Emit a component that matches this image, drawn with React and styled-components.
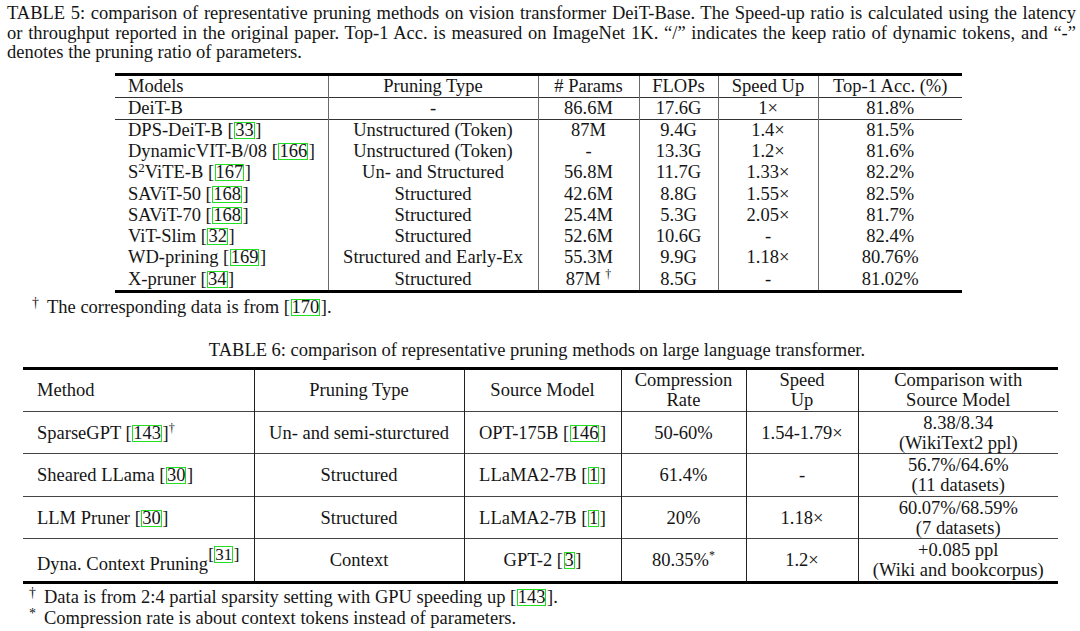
import styled, { createGlobalStyle } from "styled-components";

const GlobalStyle = createGlobalStyle`
  html, body {
    margin: 0;
    padding: 0;
    background: #fff;
  }
  body {
    font-family: "Liberation Serif", "Times New Roman", serif;
    color: #151515;
  }
`;

const Page = styled.div`
  width: 1080px;
  height: 631px;
  box-sizing: border-box;
  padding: 4px 4px 0 7px;
  overflow: hidden;
  font-size: 18.5px;
`;

const Caption = styled.div`
  line-height: 19.5px;
`;

const CapLine = styled.span`
  display: block;
  text-align: justify;
  text-align-last: ${(p) => (p.$last ? "left" : "justify")};
`;

const Table = styled.table`
  border-collapse: collapse;
  table-layout: fixed;
  width: ${(p) => p.$width}px;
  margin: ${(p) => p.$top}px 0 0 ${(p) => p.$left}px;
  border-top: 3px solid #000;
  border-bottom: 3px solid #000;
`;

const Row = styled.tr`
  border-bottom: ${(p) => (p.$rule ? `1px solid ${p.$rule}` : "none")};
`;

const Cell5 = styled.td`
  height: ${(p) => p.$h}px;
  padding: 0 0 0 ${(p) => (p.$left ? 13 : 0)}px;
  line-height: 21px;
  text-align: ${(p) => (p.$left ? "left" : "center")};
  border-left: ${(p) => (p.$left ? "none" : "1px solid #6a6a6a")};
  white-space: nowrap;
  vertical-align: middle;
`;

const Cell6 = styled.td`
  height: ${(p) => p.$h}px;
  padding: 0 0 0 ${(p) => (p.$left ? 14 : 0)}px;
  line-height: 20px;
  text-align: ${(p) => (p.$left ? "left" : "center")};
  border-left: ${(p) => (p.$left ? "none" : "1px solid #222")};
  white-space: nowrap;
  vertical-align: middle;
`;

const Cite = styled.span`
  display: inline-block;
  border: 1px solid #22e022;
  line-height: 15px;
  padding: 0;
  margin: 0 0.5px;
`;

const Sup = styled.sup`
  font-size: ${(p) => p.$size || 12}px;
  line-height: 0;
  vertical-align: ${(p) => p.$up || 7}px;
`;

const Mark = styled.span`
  display: inline-block;
  width: 15px;
  font-size: 14px;
  line-height: 0;
  vertical-align: 6px;
`;

const Note = styled.div`
  line-height: ${(p) => p.$lh || 20}px;
  padding-left: ${(p) => p.$indent}px;
  margin-top: ${(p) => p.$top || 0}px;
`;

const Title6 = styled.div`
  text-align: center;
  padding-right: 9px;
  line-height: 20px;
  margin-top: 23px;
`;

const Lines = styled.span`
  display: inline-block;
  line-height: 20px;
`;

const ref = (n) => (
  <>
    [<Cite>{n}</Cite>]
  </>
);

const cols5 = [213, 210, 101, 79, 100, 144];
const cols6 = [231, 210, 157, 125, 112, 200];

const rows5 = [
  [<>DPS-DeiT-B {ref(33)}</>, "Unstructured (Token)", "87M", "9.4G", "1.4×", "81.5%"],
  [<>DynamicVIT-B/08 {ref(166)}</>, "Unstructured (Token)", "-", "13.3G", "1.2×", "81.6%"],
  [<>S<Sup $size={13} $up={6}>2</Sup>ViTE-B {ref(167)}</>, "Un- and Structured", "56.8M", "11.7G", "1.33×", "82.2%"],
  [<>SAViT-50 {ref(168)}</>, "Structured", "42.6M", "8.8G", "1.55×", "82.5%"],
  [<>SAViT-70 {ref(168)}</>, "Structured", "25.4M", "5.3G", "2.05×", "81.7%"],
  [<>ViT-Slim {ref(32)}</>, "Structured", "52.6M", "10.6G", "-", "82.4%"],
  [<>WD-prining {ref(169)}</>, "Structured and Early-Ex", "55.3M", "9.9G", "1.18×", "80.76%"],
  [<>X-pruner {ref(34)}</>, "Structured", <>87M <Sup>†</Sup></>, "8.5G", "-", "81.02%"],
];

const two = (a, b) => (
  <Lines>
    {a}
    <br />
    {b}
  </Lines>
);

const rows6 = [
  [<>SparseGPT {ref(143)}<Sup>†</Sup></>, "Un- and semi-sturctured", <>OPT-175B {ref(146)}</>, "50-60%", "1.54-1.79×", two("8.38/8.34", "(WikiText2 ppl)")],
  [<>Sheared LLama {ref(30)}</>, "Structured", <>LLaMA2-7B {ref(1)}</>, "61.4%", "-", two("56.7%/64.6%", "(11 datasets)")],
  [<>LLM Pruner {ref(30)}</>, "Structured", <>LLaMA2-7B {ref(1)}</>, "20%", "1.18×", two("60.07%/68.59%", "(7 datasets)")],
  [<>Dyna. Context Pruning<Sup $size={17} $up={10}>{ref(31)}</Sup></>, "Context", <>GPT-2 {ref(3)}</>, <>80.35%<Sup>*</Sup></>, "1.2×", two("+0.085 ppl", "(Wiki and bookcorpus)")],
];

function VisionTable() {
  return (
    <Table $width={847} $left={108} $top={10}>
      <colgroup>
        {cols5.map((w, i) => (
          <col key={i} style={{ width: w }} />
        ))}
      </colgroup>
      <tbody>
        <Row $rule="#333">
          {["Models", "Pruning Type", "# Params", "FLOPs", "Speed Up", "Top-1 Acc. (%)"].map((h, i) => (
            <Cell5 key={i} $h={21} $left={i === 0}>{h}</Cell5>
          ))}
        </Row>
        <Row $rule="#333">
          {["DeiT-B", "-", "86.6M", "17.6G", "1×", "81.8%"].map((c, i) => (
            <Cell5 key={i} $h={21} $left={i === 0}>{c}</Cell5>
          ))}
        </Row>
        {rows5.map((r, ri) => (
          <Row key={ri}>
            {r.map((c, i) => (
              <Cell5 key={i} $h={21.3} $left={i === 0}>{c}</Cell5>
            ))}
          </Row>
        ))}
      </tbody>
    </Table>
  );
}

function LanguageTable() {
  const head = [
    "Method",
    "Pruning Type",
    "Source Model",
    two("Compression", "Rate"),
    two("Speed", "Up"),
    two("Comparison with", "Source Model"),
  ];
  return (
    <Table $width={1035} $left={16} $top={7}>
      <colgroup>
        {cols6.map((w, i) => (
          <col key={i} style={{ width: w }} />
        ))}
      </colgroup>
      <tbody>
        <Row $rule="#444">
          {head.map((h, i) => (
            <Cell6 key={i} $h={41} $left={i === 0}>{h}</Cell6>
          ))}
        </Row>
        {rows6.map((r, ri) => (
          <Row key={ri} $rule={ri < rows6.length - 1 ? "#444" : null}>
            {r.map((c, i) => (
              <Cell6 key={i} $h={41.5} $left={i === 0}>{c}</Cell6>
            ))}
          </Row>
        ))}
      </tbody>
    </Table>
  );
}

export default function App() {
  return (
    <>
      <GlobalStyle />
      <Page>
        <Caption>
          <CapLine>
            TABLE 5: comparison of representative pruning methods on vision transformer DeiT-Base. The Speed-up ratio is calculated using the latency
          </CapLine>
          <CapLine>
            or throughput reported in the original paper. Top-1 Acc. is measured on ImageNet 1K. “/” indicates the keep ratio of dynamic tokens, and “-”
          </CapLine>
          <CapLine $last>denotes the pruning ratio of parameters.</CapLine>
        </Caption>
        <VisionTable />
        <Note $indent={25} $top={4}>
          <Mark>†</Mark>The corresponding data is from {ref(170)}.
        </Note>
        <Title6>TABLE 6: comparison of representative pruning methods on large language transformer.</Title6>
        <LanguageTable />
        <Note $indent={22} $top={3} $lh={21}>
          <Mark>†</Mark>Data is from 2:4 partial sparsity setting with GPU speeding up {ref(143)}.
        </Note>
        <Note $indent={22} $lh={21}>
          <Mark>*</Mark>Compression rate is about context tokens instead of parameters.
        </Note>
      </Page>
    </>
  );
}
